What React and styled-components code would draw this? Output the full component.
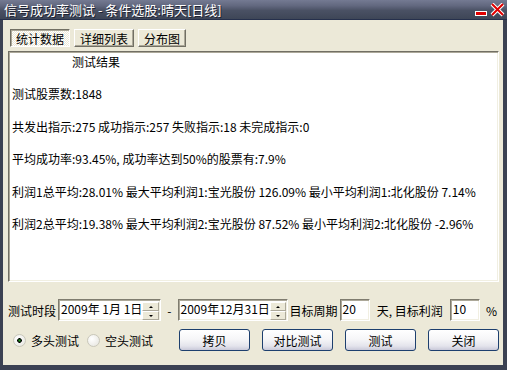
import styled, { createGlobalStyle } from "styled-components";

const GlobalStyle = createGlobalStyle`
  html, body {
    margin: 0;
    padding: 0;
  }
  body {
    font-family: "Noto Sans CJK SC", "Liberation Sans", sans-serif;
    font-size: 12px;
    color: #000;
  }
`;

const Window = styled.div`
  width: 507px;
  height: 370px;
  display: flex;
  flex-direction: column;
  background: #3b4152;
  overflow: hidden;
`;

const TitleBar = styled.div`
  height: 19px;
  border-bottom: 1px solid #26304c;
  background: linear-gradient(#747a92 0%, #62687f 30%, #4a5164 55%, #3e4657 100%);
  display: flex;
  align-items: center;
  justify-content: space-between;
  padding: 0 2px 0 4px;
  color: #fff;
  font-size: 13px;
  line-height: 19px;
  text-shadow: 1px 1px 0 #1e2333;
`;

const Body = styled.div`
  flex: 1;
  margin: 0 4px 5px 3px;
  background: #ece9d8;
  padding: 9px 4px 0 5px;
  display: flex;
  flex-direction: column;
`;

const Tabs = styled.div`
  display: flex;
  gap: 4px;
  padding-left: 2px;
  height: 18px;
`;

const Tab = styled.div`
  height: 18px;
  box-sizing: border-box;
  padding: 0 5px;
  display: flex;
  align-items: center;
  font-size: 12px;
  border: 1px solid;
  border-color: ${(p) => (p.$active ? "#716f64 #fff #fff #716f64" : "#fff #716f64 #716f64 #fff")};
  box-shadow: ${(p) =>
    p.$active ? "inset 1px 1px #aca899" : "inset -1px -1px #aca899"};
  background: ${(p) =>
    p.$active
      ? "repeating-conic-gradient(#ffffff 0 25%, #ece9d8 0 50%) 0 0 / 2px 2px"
      : "#ece9d8"};
`;

const Results = styled.div`
  margin-top: 4px;
  height: 231px;
  box-sizing: border-box;
  background: #fff;
  border: 1px solid;
  border-color: #716f64 #fff #fff #716f64;
  box-shadow: inset 1px 1px #aca899, inset -1px -1px #f1efe2;
  padding: 3px 3px 0 3px;
  display: flex;
  flex-direction: column;
  gap: 19.4px;
`;

const Line = styled.div`
  line-height: 13px;
  height: 13px;
  white-space: pre;
  padding-left: ${(p) => p.$indent || 0}px;
`;

const Row = styled.div`
  display: flex;
  align-items: center;
  height: 22px;
  margin-top: ${(p) => p.$top}px;
`;

const Label = styled.span`
  white-space: pre;
  margin: 0 ${(p) => p.$right ?? 2}px 0 ${(p) => p.$left ?? 0}px;
`;

const Field = styled.div`
  width: ${(p) => p.$w}px;
  height: 22px;
  box-sizing: border-box;
  background: #fff;
  border: 1px solid;
  border-color: #7f7c6f #fff #fff #7f7c6f;
  box-shadow: inset 1px 1px #aca899, inset -1px -1px #f1efe2;
  display: flex;
  align-items: flex-start;
  padding: 2px 1px 0 2px;
  line-height: 14px;
  white-space: pre;
`;

const DateField = styled(Field)`
  padding: 2px 1px 1px 2px;
  justify-content: space-between;
`;

const Spinner = styled.div`
  display: flex;
  flex-direction: column;
  width: 17px;
`;

const SpinButton = styled.div`
  height: 9px;
  box-sizing: border-box;
  background: #ece9d8;
  border: 1px solid;
  border-color: #fff #aca899 #aca899 #fff;
  display: flex;
  align-items: center;
  justify-content: center;

  &::after {
    content: "";
    border-left: 2px solid transparent;
    border-right: 2px solid transparent;
    ${(p) => (p.$down ? "border-top: 2px solid #000;" : "border-bottom: 2px solid #000;")}
  }
`;

const Radios = styled.div`
  display: flex;
  align-items: center;
  padding-left: 5px;
`;

const Radio = styled.span`
  width: 13px;
  height: 13px;
  box-sizing: border-box;
  border-radius: 50%;
  border: 1px solid #c9c7ba;
  background: ${(p) =>
    p.$checked
      ? "radial-gradient(circle, #21a121 0, #000 2px, transparent 2.6px), radial-gradient(circle at 35% 35%, #fff, #e4e3dc)"
      : "radial-gradient(circle at 35% 35%, #fff, #e4e3dc)"};
  margin-right: 5px;
`;

const Buttons = styled.div`
  margin-left: auto;
  display: flex;
  gap: 12px;
`;

const Button = styled.div`
  width: 71px;
  height: 22px;
  box-sizing: border-box;
  border: 1px solid #1d3f6e;
  border-radius: 3px;
  background: linear-gradient(#ffffff 0%, #f6f6f8 45%, #e4e4ec 80%, #c9c9d9 100%);
  display: flex;
  align-items: center;
  justify-content: center;
  font-size: 12px;
`;

const CloseIcons = () => (
  <svg width="30" height="14" viewBox="0 0 30 14">
    <rect x="0.5" y="8.5" width="11" height="4" fill="#e00000" stroke="#fff" strokeWidth="1" />
    <path d="M17 1 L28 12 M28 1 L17 12" stroke="#fff" strokeWidth="4" />
    <path d="M17 1 L28 12 M28 1 L17 12" stroke="#e00000" strokeWidth="2" />
  </svg>
);

const lines = [
  { text: "测试结果", indent: 60 },
  { text: "测试股票数:1848" },
  { text: "共发出指示:275 成功指示:257 失败指示:18 未完成指示:0" },
  { text: "平均成功率:93.45%, 成功率达到50%的股票有:7.9%" },
  { text: "利润1总平均:28.01% 最大平均利润1:宝光股份 126.09% 最小平均利润1:北化股份 7.14%" },
  { text: "利润2总平均:19.38% 最大平均利润2:宝光股份 87.52% 最小平均利润2:北化股份 -2.96%" },
];

export default function App() {
  return (
    <>
      <GlobalStyle />
      <Window>
        <TitleBar>
          <span>信号成功率测试 - 条件选股:晴天[日线]</span>
          <CloseIcons />
        </TitleBar>
        <Body>
          <Tabs>
            <Tab $active>统计数据</Tab>
            <Tab>详细列表</Tab>
            <Tab>分布图</Tab>
          </Tabs>
          <Results>
            {lines.map((l) => (
              <Line key={l.text} $indent={l.indent}>
                {l.text}
              </Line>
            ))}
          </Results>
          <Row $top={17}>
            <Label>测试时段</Label>
            <DateField $w={109}>
              <span>2009年 1月 1日</span>
              <Spinner>
                <SpinButton />
                <SpinButton $down />
              </Spinner>
            </DateField>
            <Label $left={6} $right={6}>-</Label>
            <DateField $w={110}>
              <span>2009年12月31日</span>
              <Spinner>
                <SpinButton />
                <SpinButton $down />
              </Spinner>
            </DateField>
            <Label $left={2}>目标周期</Label>
            <Field $w={32}>20</Field>
            <Label $left={7} $right={7}>天, 目标利润</Label>
            <Field $w={32}>10</Field>
            <Label $left={6}>%</Label>
          </Row>
          <Row $top={8}>
            <Radios>
              <Radio $checked />
              <Label $right={8}>多头测试</Label>
              <Radio />
              <Label>空头测试</Label>
            </Radios>
            <Buttons>
              <Button>拷贝</Button>
              <Button>对比测试</Button>
              <Button>测试</Button>
              <Button>关闭</Button>
            </Buttons>
          </Row>
        </Body>
      </Window>
    </>
  );
}
